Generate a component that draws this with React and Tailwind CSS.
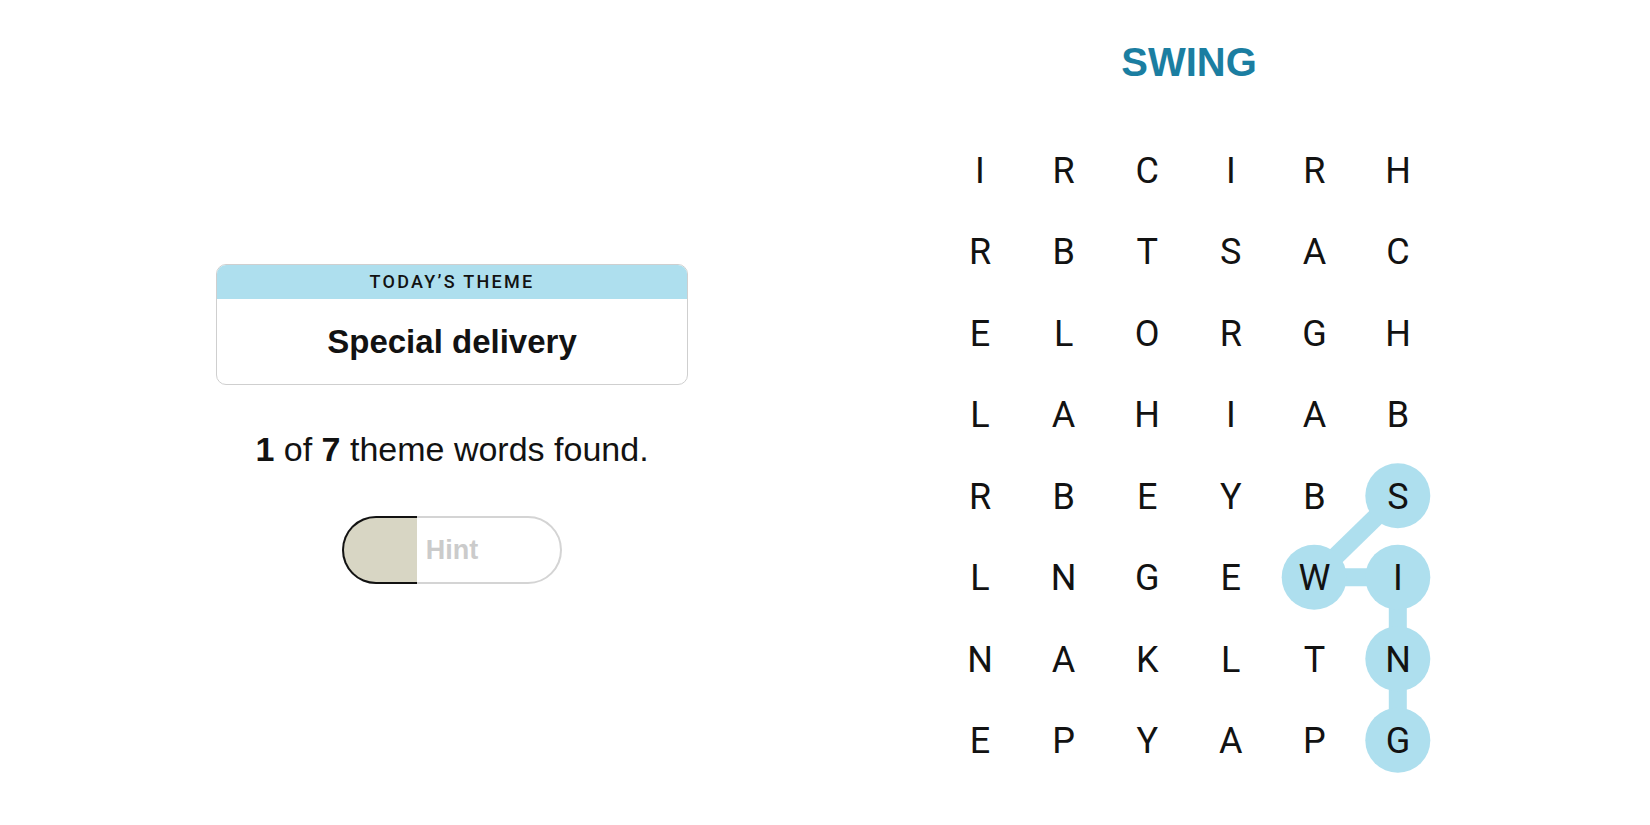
import React from 'react';

const LETTERS = [
  ['I', 'R', 'C', 'I', 'R', 'H'],
  ['R', 'B', 'T', 'S', 'A', 'C'],
  ['E', 'L', 'O', 'R', 'G', 'H'],
  ['L', 'A', 'H', 'I', 'A', 'B'],
  ['R', 'B', 'E', 'Y', 'B', 'S'],
  ['L', 'N', 'G', 'E', 'W', 'I'],
  ['N', 'A', 'K', 'L', 'T', 'N'],
  ['E', 'P', 'Y', 'A', 'P', 'G'],
];

// found word path: [col, row]
const PATH = [
  [5, 4],
  [4, 5],
  [5, 5],
  [5, 6],
  [5, 7],
];

const CELL_W = 83.6;
const CELL_H = 81.5;

const center = ([c, r]) => [CELL_W / 2 + c * CELL_W, CELL_H / 2 + r * CELL_H];

function Board() {
  const points = PATH.map(center);
  return (
    <div className="relative w-[501.6px]">
      {/* highlight drawing behind the letters */}
      <svg className="absolute inset-0" width="501.6" height="652" viewBox="0 0 501.6 652">
        {points.slice(1).map((p, i) => (
          <line
            key={i}
            x1={points[i][0]}
            y1={points[i][1]}
            x2={p[0]}
            y2={p[1]}
            stroke="#aedfee"
            strokeWidth="18"
          />
        ))}
        {points.map(([x, y], i) => (
          <circle key={i} cx={x} cy={y} r="32.5" fill="#aedfee" />
        ))}
      </svg>
      <div className="relative grid grid-cols-6">
        {LETTERS.flat().map((ch, i) => (
          <div
            key={i}
            className="h-[81.5px] pt-[3px] flex items-center justify-center text-[36px] text-[#121212] font-['Roboto',sans-serif]"
          >
            {ch}
          </div>
        ))}
      </div>
    </div>
  );
}

export default function App() {
  return (
    <div className="w-[1650px] h-[825px] bg-white flex font-['Liberation_Sans',Arial,sans-serif] text-[#121212] overflow-hidden">
      <div className="w-[904px] flex flex-col items-center pt-[264px]">
        <div className="w-[472px] h-[121px] rounded-[10px] border border-[#cfcfcf] overflow-hidden flex flex-col">
          <div className="h-[35px] -mt-px bg-[#aedfee] flex items-center justify-center text-[18px] font-medium tracking-[2.3px] uppercase font-['Roboto',sans-serif]">
            Today’s Theme
          </div>
          <div className="flex-1 flex items-center justify-center text-[33px] font-bold">
            Special delivery
          </div>
        </div>

        <p className="mt-[44px] text-[34px] leading-[40px]">
          <span className="font-bold">1</span> of <span className="font-bold">7</span> theme words found.
        </p>

        <button className="relative mt-[47px] w-[220px] h-[68px] rounded-full border-2 border-[#d4d4d4] bg-white flex items-center justify-center">
          <span className="absolute -left-[2px] -top-[2px] -bottom-[2px] w-[75px] rounded-l-full border-2 border-r-0 border-[#121212] bg-[#d8d6c4]" />
          <span className="relative text-[27px] font-bold text-[#cbcbcb]">Hint</span>
        </button>
      </div>

      <div className="w-[570px] flex flex-col items-center pt-[38px]">
        <h1 className="text-[40px] leading-[48px] font-bold text-[#1b7ea1]">SWING</h1>
        <div className="mt-[42.6px]">
          <Board />
        </div>
      </div>
    </div>
  );
}
